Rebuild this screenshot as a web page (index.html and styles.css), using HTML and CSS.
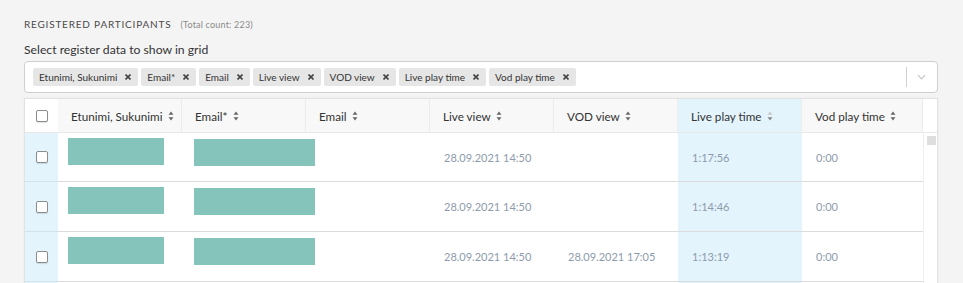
FILE: index.html
```html
<!DOCTYPE html>
<html>
<head>
<meta charset="utf-8">
<link rel="stylesheet" href="styles.css">
</head>
<body>
<div class="page">
  <div class="title-row">
    <span class="title">REGISTERED PARTICIPANTS</span>
    <span class="count">(Total count: 223)</span>
  </div>
  <div class="label">Select register data to show in grid</div>
  <div class="select">
    <div class="tags">
      <span class="tag">Etunimi, Sukunimi<svg class="x" viewBox="0 0 6 6"><path d="M0.5 0.5L5.5 5.5M5.5 0.5L0.5 5.5"/></svg></span>
      <span class="tag">Email*<svg class="x" viewBox="0 0 6 6"><path d="M0.5 0.5L5.5 5.5M5.5 0.5L0.5 5.5"/></svg></span>
      <span class="tag">Email<svg class="x" viewBox="0 0 6 6"><path d="M0.5 0.5L5.5 5.5M5.5 0.5L0.5 5.5"/></svg></span>
      <span class="tag">Live view<svg class="x" viewBox="0 0 6 6"><path d="M0.5 0.5L5.5 5.5M5.5 0.5L0.5 5.5"/></svg></span>
      <span class="tag">VOD view<svg class="x" viewBox="0 0 6 6"><path d="M0.5 0.5L5.5 5.5M5.5 0.5L0.5 5.5"/></svg></span>
      <span class="tag">Live play time<svg class="x" viewBox="0 0 6 6"><path d="M0.5 0.5L5.5 5.5M5.5 0.5L0.5 5.5"/></svg></span>
      <span class="tag">Vod play time<svg class="x" viewBox="0 0 6 6"><path d="M0.5 0.5L5.5 5.5M5.5 0.5L0.5 5.5"/></svg></span>
    </div>
    <div class="indicator">
      <span class="sep"></span>
      <svg class="chev" viewBox="0 0 10 6"><path d="M1 1L5 5L9 1"/></svg>
    </div>
  </div>

  <div class="grid">
    <div class="hcell hcheck"><span class="cb"></span></div>
    <div class="hcell">Etunimi, Sukunimi<svg class="sort" viewBox="0 0 6 10"><path d="M3 0.5L5.5 3.8H0.5Z"/><path d="M3 9.5L5.5 6.2H0.5Z"/></svg></div>
    <div class="hcell">Email*<svg class="sort" viewBox="0 0 6 10"><path d="M3 0.5L5.5 3.8H0.5Z"/><path d="M3 9.5L5.5 6.2H0.5Z"/></svg></div>
    <div class="hcell">Email<svg class="sort" viewBox="0 0 6 10"><path d="M3 0.5L5.5 3.8H0.5Z"/><path d="M3 9.5L5.5 6.2H0.5Z"/></svg></div>
    <div class="hcell">Live view<svg class="sort" viewBox="0 0 6 10"><path d="M3 0.5L5.5 3.8H0.5Z"/><path d="M3 9.5L5.5 6.2H0.5Z"/></svg></div>
    <div class="hcell">VOD view<svg class="sort" viewBox="0 0 6 10"><path d="M3 0.5L5.5 3.8H0.5Z"/><path d="M3 9.5L5.5 6.2H0.5Z"/></svg></div>
    <div class="hcell hl">Live play time<svg class="sort sorted" viewBox="0 0 6 10"><path class="faint" d="M3 0.5L5.5 3.8H0.5Z"/><path d="M3 9.5L5.5 6.2H0.5Z"/></svg></div>
    <div class="hcell">Vod play time<svg class="sort" viewBox="0 0 6 10"><path d="M3 0.5L5.5 3.8H0.5Z"/><path d="M3 9.5L5.5 6.2H0.5Z"/></svg></div>
    <div class="hcell hscroll"></div>

    <div class="cell ccheck"><span class="cb"></span></div>
    <div class="cell img"><span class="blk b1"></span></div>
    <div class="cell img"><span class="blk b2"></span></div>
    <div class="cell"></div>
    <div class="cell">28.09.2021 14:50</div>
    <div class="cell"></div>
    <div class="cell hl">1:17:56</div>
    <div class="cell">0:00</div>
    <div class="scroll"><span class="thumb"></span></div>

    <div class="cell ccheck"><span class="cb"></span></div>
    <div class="cell img"><span class="blk b1"></span></div>
    <div class="cell img"><span class="blk b2"></span></div>
    <div class="cell"></div>
    <div class="cell">28.09.2021 14:50</div>
    <div class="cell"></div>
    <div class="cell hl">1:14:46</div>
    <div class="cell">0:00</div>

    <div class="cell ccheck"><span class="cb"></span></div>
    <div class="cell img"><span class="blk b1"></span></div>
    <div class="cell img"><span class="blk b2"></span></div>
    <div class="cell"></div>
    <div class="cell">28.09.2021 14:50</div>
    <div class="cell">28.09.2021 17:05</div>
    <div class="cell hl">1:13:19</div>
    <div class="cell">0:00</div>

    <div class="cell ccheck"></div>
    <div class="cell"></div>
    <div class="cell"></div>
    <div class="cell"></div>
    <div class="cell"></div>
    <div class="cell"></div>
    <div class="cell hl"></div>
    <div class="cell"></div>
  </div>
</div>
</body>
</html>
```
FILE: styles.css
```css
html, body {
  margin: 0;
  padding: 0;
  background: #f4f4f4;
  height: 283px;
  overflow: hidden;
}
body {
  font-family: Lato, "Noto Sans", sans-serif;
  color: #333;
}
.page {
  padding: 17px 25px 0 24px;
}
.title-row {
  display: flex;
  align-items: baseline;
  height: 14px;
  line-height: 14px;
}
.title {
  font-size: 10px;
  letter-spacing: 0.8px;
  color: #4a4a4a;
}
.count {
  font-size: 9px;
  color: #8a8a8a;
  margin-left: 9px;
  letter-spacing: 0.2px;
}
.label {
  margin-top: 11px;
  font-size: 12.2px;
  line-height: 16px;
  color: #333;
}
.select {
  margin-top: 3px;
  height: 30px;
  background: #fff;
  border: 1px solid #cfcfcf;
  border-radius: 4px;
  display: flex;
  align-items: center;
}
.tags {
  flex: 1;
  display: flex;
  gap: 3px;
  padding-left: 8px;
}
.tag {
  display: inline-flex;
  align-items: center;
  height: 18px;
  background: #e6e6e6;
  border-radius: 2px;
  font-size: 10px;
  color: #333;
  padding: 0 7px 0 6px;
}
.x {
  width: 6px;
  height: 6px;
  margin-left: 8px;
  stroke: #444;
  stroke-width: 1.6;
  fill: none;
}
.indicator {
  display: flex;
  align-items: center;
  height: 100%;
}
.sep {
  width: 1px;
  height: 20px;
  background: #d0d0d0;
}
.chev {
  width: 9px;
  height: 6px;
  margin: 0 11px 0 10px;
  stroke: #c4c4c4;
  stroke-width: 1.3;
  fill: none;
}
.grid {
  margin-top: 5px;
  display: grid;
  grid-template-columns: 33px 124px 124px 124px 124px 124px 124px 121px 14px;
  grid-template-rows: 34px 49px 50px 50px 50px;
  border: 1px solid #e2e2e2;
  background: #fff;
  box-shadow: 0 0 2px rgba(0,0,0,0.06);
}
.hcell {
  background: #f8f8f8;
  border-bottom: 1px solid #e8e8e8;
  border-right: 1px solid #ececec;
  display: flex;
  align-items: center;
  padding-left: 13px;
  font-size: 11.7px;
  color: #333;
  white-space: nowrap;
}
.hcell.hcheck {
  background: #fff;
  justify-content: center;
  padding-left: 0;
  border-right: none;
}
.hcell.hl {
  background: #e3f4fd;
}
.hcell.hscroll {
  border-right: none;
  background: #fff;
}
.sort {
  width: 6px;
  height: 10px;
  margin-left: 5px;
  fill: #666;
}
.sort .faint {
  fill: #c8c8c8;
}
.sorted path:not(.faint) {
  fill: #888;
}
.cb {
  display: block;
  width: 10px;
  height: 10px;
  border: 1px solid #8c8c8c;
  border-radius: 2px;
  background: #fff;
  box-shadow: 0 1px 1px rgba(0,0,0,0.12);
}
.cell {
  border-bottom: 1px solid #dcdcdc;
  display: flex;
  align-items: center;
  padding-left: 14px;
  font-size: 11px;
  color: #8d9bac;
  white-space: nowrap;
  background: #fff;
  min-width: 0;
}
.cell.ccheck {
  background: #e3f4fd;
  justify-content: center;
  padding-left: 0;
  border-bottom-color: #d3e3ec;
}
.cell.hl {
  background: #e3f4fd;
}
.cell.img {
  align-items: flex-start;
  padding-left: 10px;
  overflow: visible;
}
.blk {
  display: block;
  height: 27px;
  background: #85c4bb;
  margin-top: 5px;
  flex: none;
}
.b1 {
  width: 96px;
}
.b2 {
  width: 121px;
  margin-left: 2px;
  margin-top: 6px;
  position: relative;
  z-index: 1;
}
.scroll {
  grid-column: 9;
  grid-row: 2 / span 4;
  background: #fff;
  border-left: 1px solid #eeeeee;
}
.thumb {
  display: block;
  width: 9px;
  height: 9px;
  margin: 3px 0 0 3px;
  background: #dedede;
}
```
